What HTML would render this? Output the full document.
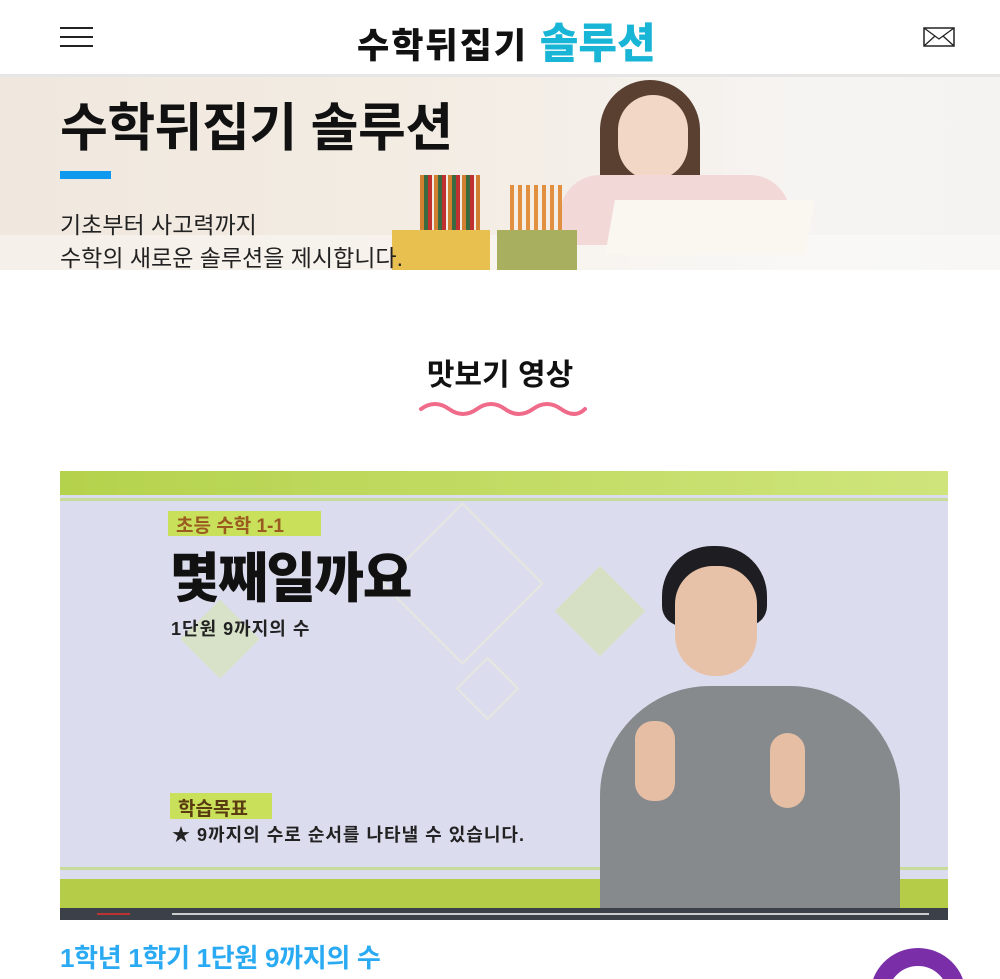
<!DOCTYPE html>
<html><head><meta charset="utf-8"><style>
*{margin:0;padding:0;box-sizing:border-box}
html{width:1000px;height:979px;overflow:hidden}
body{width:1000px;height:979px;overflow:hidden;background:#fff;font-family:"Liberation Sans","Noto Sans CJK KR",sans-serif;position:relative}
.abs{position:absolute}
</style></head><body>
<div class="abs" style="left:60px;top:27px;width:33px;height:2px;background:#222"></div>
<div class="abs" style="left:60px;top:36px;width:33px;height:2px;background:#222"></div>
<div class="abs" style="left:60px;top:45px;width:33px;height:2px;background:#222"></div>
<div class="abs" style="left:357px;top:10px;font-size:35px;font-weight:900;color:#111;letter-spacing:2px;white-space:nowrap">수학뒤집기 <span style="color:#19b5d6;font-size:42px;letter-spacing:0px">솔루션</span></div>
<svg class="abs" style="left:923px;top:27px" width="32" height="20"><rect x="1" y="1" width="30" height="18" fill="none" stroke="#222" stroke-width="1.5"/><path d="M1 1L16 12L31 1M1 19L12 9M31 19L20 9" fill="none" stroke="#222" stroke-width="1.3"/></svg>
<div class="abs" style="left:0;top:74px;width:1000px;height:3px;background:#e6e6e6"></div>
<div class="abs" style="left:0;top:77px;width:1000px;height:193px;background:linear-gradient(90deg,#f0e8de 0%,#f3ece3 40%,#f4efe9 60%,#f6f4f2 80%,#f5f3f1 100%)"></div>
<div class="abs" style="left:0;top:235px;width:1000px;height:35px;background:rgba(255,255,255,.35)"></div>
<div class="abs" style="left:600px;top:80px;width:100px;height:140px;border-radius:50px 50px 20px 20px;background:#5a4030"></div>
<div class="abs" style="left:618px;top:95px;width:70px;height:85px;border-radius:40px;background:#f2d6c6"></div>
<div class="abs" style="left:560px;top:175px;width:230px;height:70px;border-radius:40px 40px 10px 10px;background:#f3d8d8"></div>
<div class="abs" style="left:610px;top:200px;width:200px;height:55px;background:#faf6f0;transform:skewX(-10deg)"></div>
<div class="abs" style="left:392px;top:230px;width:98px;height:40px;background:#e8c050"></div>
<div class="abs" style="left:497px;top:230px;width:80px;height:40px;background:#a8b060"></div>
<div class="abs" style="left:420px;top:175px;width:60px;height:55px;background:repeating-linear-gradient(90deg,#d08030 0 4px,#3a6a40 4px 8px,#c03030 8px 12px,transparent 12px 14px)"></div>
<div class="abs" style="left:510px;top:185px;width:55px;height:45px;background:repeating-linear-gradient(90deg,#e09040 0 4px,transparent 4px 8px)"></div>
<div class="abs" style="left:60px;top:86px;font-size:52px;font-weight:700;color:#111;letter-spacing:-0.5px;white-space:nowrap">수학뒤집기 솔루션</div>
<div class="abs" style="left:60px;top:171px;width:51px;height:8px;background:#0f9af0"></div>
<div class="abs" style="left:60px;top:209px;font-size:23px;color:#222;line-height:33px;white-space:nowrap">기초부터 사고력까지<br>수학의 새로운 솔루션을 제시합니다.</div>
<div class="abs" style="left:0;top:350px;width:1000px;text-align:center;font-size:30px;font-weight:700;color:#111">맛보기 영상</div>
<svg class="abs" style="left:418px;top:398px" width="170" height="22"><path d="M3 11 Q17 1 31 11 T59 11 T87 11 T115 11 T143 11 T167 11" fill="none" stroke="#f06a8a" stroke-width="4" stroke-linecap="round"/></svg>
<div class="abs" style="left:60px;top:471px;width:888px;height:449px;background:#dcdcef;overflow:hidden">
 <div class="abs" style="left:0;top:0;width:888px;height:24px;background:linear-gradient(90deg,#b5d24c,#cfe57c)"></div>
 <div class="abs" style="left:0;top:27px;width:888px;height:3px;background:#c8db9a"></div>
 <div class="abs" style="left:0;top:408px;width:888px;height:30px;background:#b4cc48"></div>
 <div class="abs" style="left:0;top:396px;width:888px;height:3px;background:#c8db9a"></div>
 <div class="abs" style="left:345px;top:55px;width:115px;height:115px;border:2px solid #e6e6e0;transform:rotate(45deg)"></div>
 <div class="abs" style="left:508px;top:108px;width:64px;height:64px;background:#d6e0c4;transform:rotate(45deg)"></div>
 <div class="abs" style="left:132px;top:140px;width:56px;height:56px;background:#d8e2c8;transform:rotate(45deg)"></div>
 <div class="abs" style="left:405px;top:195px;width:45px;height:45px;border:2px solid #e6e6e0;transform:rotate(45deg)"></div>
 <div class="abs" style="left:108px;top:40px;width:153px;height:25px;background:#c8e05a"></div>
 <div class="abs" style="left:116px;top:40px;font-size:19px;font-weight:700;color:#9a5a20;white-space:nowrap">초등 수학 1-1</div>
 <div class="abs" style="left:110px;top:63px;font-size:54px;font-weight:900;color:#111;letter-spacing:-1.5px;white-space:nowrap">몇째일까요</div>
 <div class="abs" style="left:111px;top:144px;font-size:18px;font-weight:700;color:#222;letter-spacing:1px;white-space:nowrap">1단원 9까지의 수</div>
 <div class="abs" style="left:110px;top:322px;width:102px;height:26px;background:#c8e05a"></div>
 <div class="abs" style="left:118px;top:323px;font-size:19px;font-weight:700;color:#5a3a10;white-space:nowrap">학습목표</div>
 <div class="abs" style="left:112px;top:350px;font-size:18px;font-weight:700;color:#222;letter-spacing:1px;white-space:nowrap">★ 9까지의 수로 순서를 나타낼 수 있습니다.</div>
 <div class="abs" style="left:602px;top:75px;width:105px;height:80px;border-radius:50px 50px 20px 20px;background:#1e1e22"></div>
 <div class="abs" style="left:615px;top:95px;width:82px;height:110px;border-radius:38px 38px 40px 40px;background:#e8c2a8"></div>
 <div class="abs" style="left:540px;top:215px;width:300px;height:240px;border-radius:110px 110px 0 0;background:#878a8c"></div>
 <div class="abs" style="left:575px;top:250px;width:40px;height:80px;border-radius:18px;background:#e6bea4"></div>
 <div class="abs" style="left:710px;top:262px;width:35px;height:75px;border-radius:18px;background:#e6bea4"></div>
 <div class="abs" style="left:0;top:437px;width:888px;height:12px;background:#3c4048"></div>
 <div class="abs" style="left:37px;top:442px;width:33px;height:2px;background:#b33"></div>
 <div class="abs" style="left:112px;top:442px;width:757px;height:2px;background:#ccc"></div>
</div>
<div class="abs" style="left:60px;top:938px;font-size:26px;font-weight:700;color:#2aaaf2;letter-spacing:-0.3px;white-space:nowrap">1학년 1학기 1단원 9까지의 수</div>
<div class="abs" style="left:870px;top:948px;width:96px;height:31px;overflow:hidden"><div style="width:96px;height:96px;border-radius:50%;border:18px solid #7a2fa8;background:#fff"></div></div>
</body></html>
